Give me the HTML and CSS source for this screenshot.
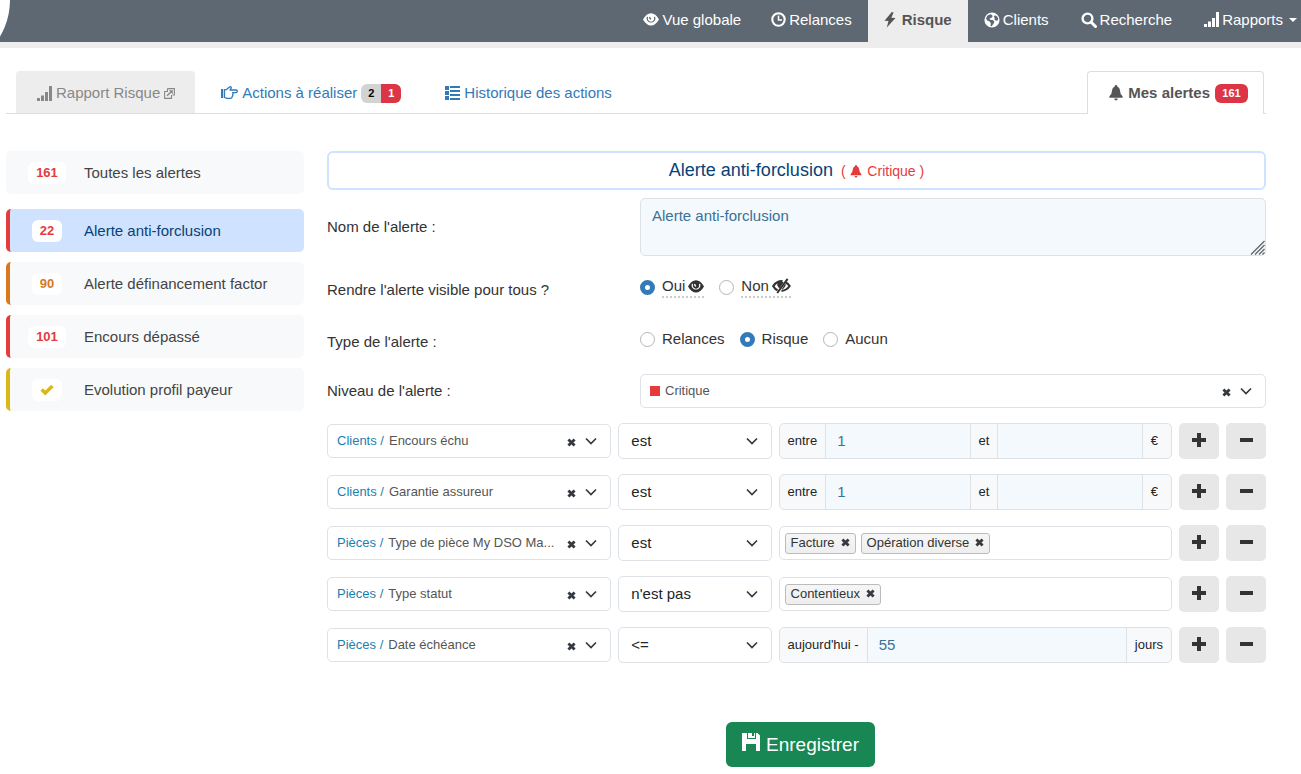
FILE: index.html
```html
<!DOCTYPE html>
<html lang="fr">
<head>
<meta charset="utf-8">
<meta name="viewport" content="width=device-width, initial-scale=1">
<title>Mes alertes</title>
<link rel="stylesheet" href="styles.css">
</head>
<body>
<svg class="sprite" aria-hidden="true">
  <symbol id="eye" viewBox="0 0 16 13"><path fill="currentColor" fill-rule="evenodd" d="M0 6.500Q3.500.3 8 .3T16 6.500Q12.500 12.500 8 12.500T0 6.500ZM3.900 3.600A4.400 4.400 0 1 0 12.100 3.600L10.900 4.200A3.200 3.200 0 1 1 5.100 4.200ZM6.300 3.800a2 2 0 0 0 1.700 2.900l.2-1.100a1.200 1.200 0 0 1-.8-1.500Z"/></symbol>
  <symbol id="eye-off" viewBox="0 0 19 16"><path d="M10.500 3.200Q4.500 3 1.300 8.200 3 11.200 5.600 12.300M13.800 4.600Q16 5.500 17.600 8 14.500 12.600 9.500 12.800" fill="none" stroke="currentColor" stroke-width="2.200"/><path d="M6 4.200Q5 8.500 7.400 9.800L11 4.500ZM13.300 6.500Q13 9.500 10.500 10.800Z" fill="currentColor" stroke="currentColor"/><path d="M15.600.8 5.200 15" stroke="currentColor" stroke-width="2"/></symbol>
  <symbol id="clock" viewBox="0 0 15 15"><circle cx="7.500" cy="7.500" r="6.200" fill="none" stroke="currentColor" stroke-width="2.100"/><path d="M7.500 3.500V8H11" fill="none" stroke="currentColor" stroke-width="1.500"/></symbol>
  <symbol id="bolt" viewBox="0 0 12 16"><path fill="currentColor" d="M7.800 0 .5 8.800 4.500 9 2.800 15.500 11.500 6 7.300 5.800 9.600.6Z"/></symbol>
  <symbol id="globe" viewBox="0 0 16 16"><path fill="currentColor" fill-rule="evenodd" d="M8 .4a7.600 7.600 0 1 1 0 15.200A7.600 7.600 0 0 1 8 .4ZM6.200 2.200 3.600 3.400 2 6.200l1.200 2.300 2.500.9 1.100 1.900-.3 2.700 1.200.2 1.900-2.600.9-2-1.900-1.500-2.500-.4-.7-1.200 1.800-.4 1.400-1.600-.5-1.500ZM11 3.200 9.800 4.600l1 1.300-.5 1.400 1.400 1.300 1.700.1.900-1.600-.9-2.400Z"/></symbol>
  <symbol id="search" viewBox="0 0 16 16"><circle cx="6.500" cy="6.500" r="4.900" fill="none" stroke="currentColor" stroke-width="2.400"/><path d="m10 10 4.500 4.500" stroke="currentColor" stroke-width="3" stroke-linecap="round"/></symbol>
  <symbol id="signal" viewBox="0 0 15 15"><path fill="currentColor" d="M0 12h3v3H0zM4 9.500h3V15H4zM8 6h3v9H8zM12 0h3v15h-3z"/></symbol>
  <symbol id="external" viewBox="0 0 11 11"><path d="M4 3.500H.6v6.900h6.900V7M3.500.6h6.900v6.400H8.500M3.500.6V3" fill="none" stroke="currentColor" stroke-width="1.100"/><path d="m3 7.800 4.500-4.400" stroke="currentColor" stroke-width="1.400"/><path fill="currentColor" d="M4.800 2.300h4v4Z"/></symbol>
  <symbol id="hand" viewBox="0 0 17 14"><path fill="currentColor" d="M0 3h2.200v9H0z"/><path d="M3.500 3.600H5.500L8.800.8q1.600-.3 1.500 1.100L9 4h6q1.400.2 1.300 1.400-.1 1.100-1.300 1.200h-3.400q.9 1 0 2.100.6 1.200-.4 1.900 0 1.600-1.600 1.700H6L3.500 11.500Z" fill="none" stroke="currentColor" stroke-width="1.300" stroke-linejoin="round"/></symbol>
  <symbol id="list" viewBox="0 0 15 14"><path fill="currentColor" d="M0 0h4v4H0zM0 5h4v4H0zM0 10h4v4H0zM5 0h10v2H5zM5 4h10v2H5zM5 8h10v2H5zM5 12h10v2H5z"/></symbol>
  <symbol id="bell" viewBox="0 0 14 16"><path fill="currentColor" d="M7 0q1.200 0 1.300 1.400Q10.800 2.300 11 5.500q.1 4 2.600 5.700v1.500H.4v-1.500Q2.900 9.500 3 5.500q.2-3.200 2.700-4.100Q5.800 0 7 0ZM5.200 13.500h3.600Q8.600 15.500 7 15.500t-1.800-2Z"/></symbol>
  <symbol id="check" viewBox="0 0 14 12"><path fill="currentColor" d="M.4 6.700 2.900 4.200 5.300 6.600 11.200.7 13.600 3.200 5.300 11.500Z"/></symbol>
  <symbol id="cross" viewBox="0 0 9 9"><path d="M1.400 1.400 7.600 7.600M7.600 1.400 1.400 7.600" stroke="currentColor" stroke-width="2.800"/></symbol>
  <symbol id="chevron" viewBox="0 0 12 8"><path d="m1 1.500 5 5 5-5" fill="none" stroke="currentColor" stroke-width="1.700"/></symbol>
  <symbol id="plus" viewBox="0 0 14 14"><path fill="currentColor" d="M5 0h4v5h5v4H9v5H5V9H0V5h5z"/></symbol>
  <symbol id="minus" viewBox="0 0 14 14"><path fill="currentColor" d="M1 5h13v4H1z"/></symbol>
  <symbol id="save" viewBox="0 0 18 18"><path fill="currentColor" fill-rule="evenodd" d="M0 0h5v6h9V0h1.500L18 2.500V18h-4v-7H4v7H0ZM6 0h4v3h2V0h1v5H6Z"/></symbol>
  <symbol id="grip" viewBox="0 0 15 15"><path d="M1 14.500 14.500 1M5 14.500 14.500 5M9 14.500 14.500 9M12.500 14.500l2-2" stroke="currentColor" stroke-width="1.300"/></symbol>
</svg>

<header class="topbar">
  <nav class="topnav">
    <a href="#"><svg class="i-eye"><use href="#eye"/></svg>Vue globale</a>
    <a href="#"><svg class="i-15"><use href="#clock"/></svg>Relances</a>
    <a href="#" class="current" aria-current="page"><svg class="i-bolt"><use href="#bolt"/></svg>Risque</a>
    <a href="#"><svg class="i-16"><use href="#globe"/></svg>Clients</a>
    <a href="#"><svg class="i-16"><use href="#search"/></svg>Recherche</a>
    <a href="#"><svg class="i-15"><use href="#signal"/></svg>Rapports<span class="caret"></span></a>
  </nav>
</header>

<div class="page">
  <nav class="tabs">
    <a href="#" class="tab tab-report"><svg class="i-15"><use href="#signal"/></svg>Rapport Risque<svg class="i-11"><use href="#external"/></svg></a>
    <a href="#" class="tab"><svg class="i-hand"><use href="#hand"/></svg>Actions à réaliser<span class="counts"><b class="todo">2</b><b class="late">1</b></span></a>
    <a href="#" class="tab"><svg class="i-list"><use href="#list"/></svg>Historique des actions</a>
    <a href="#" class="tab tab-active"><svg class="i-bell"><use href="#bell"/></svg>Mes alertes<span class="counts"><b class="late wide">161</b></span></a>
  </nav>

  <main class="columns">
    <nav class="alerts">
      <a href="#" class="alert all"><span class="num-col"><b class="num">161</b></span>Toutes les alertes</a>
      <a href="#" class="alert red selected"><span class="num-col"><b class="num">22</b></span>Alerte anti-forclusion</a>
      <a href="#" class="alert orange"><span class="num-col"><b class="num">90</b></span>Alerte définancement factor</a>
      <a href="#" class="alert red"><span class="num-col"><b class="num">101</b></span>Encours dépassé</a>
      <a href="#" class="alert yellow"><span class="num-col"><b class="num"><svg class="i-check"><use href="#check"/></svg></b></span>Evolution profil payeur</a>
    </nav>

    <form class="editor">
      <h1 class="title">Alerte anti-forclusion <small>( <svg class="i-bell-sm"><use href="#bell"/></svg> Critique )</small></h1>

      <div class="field field-name">
        <label for="name">Nom de l'alerte :</label>
        <div class="area"><textarea id="name">Alerte anti-forclusion</textarea><svg class="grip"><use href="#grip"/></svg></div>
      </div>

      <div class="field field-visible" role="radiogroup" aria-labelledby="visible-label">
        <span class="label" id="visible-label">Rendre l'alerte visible pour tous ?</span>
        <div class="radios">
          <label><input type="radio" name="visible" checked><span class="hint">Oui <svg class="i-eye"><use href="#eye"/></svg></span></label>
          <label><input type="radio" name="visible"><span class="hint">Non<svg class="i-eye-off"><use href="#eye-off"/></svg></span></label>
        </div>
      </div>

      <div class="field field-type" role="radiogroup" aria-labelledby="type-label">
        <span class="label" id="type-label">Type de l'alerte :</span>
        <div class="radios">
          <label><input type="radio" name="type">Relances</label>
          <label><input type="radio" name="type" checked>Risque</label>
          <label><input type="radio" name="type">Aucun</label>
        </div>
      </div>

      <div class="field field-level">
        <label for="level">Niveau de l'alerte :</label>
        <div class="combo"><span class="swatch"></span><select id="level"><option>Critique</option></select><button type="button" class="clear" aria-label="Effacer"><svg><use href="#cross"/></svg></button><svg class="chev"><use href="#chevron"/></svg></div>
      </div>

      <div class="rules">
        <div class="rule">
          <div class="combo"><label for="f1">Clients /</label><select id="f1"><option>Encours échu</option></select><button type="button" class="clear" aria-label="Effacer"><svg><use href="#cross"/></svg></button><svg class="chev"><use href="#chevron"/></svg></div>
          <div class="operator"><select aria-label="Opérateur"><option>est</option></select><svg class="chev"><use href="#chevron"/></svg></div>
          <div class="group"><label for="a1">entre</label><input id="a1" type="text" value="1"><label for="b1">et</label><input id="b1" type="text"><span class="unit">€</span></div>
          <button type="button" class="btn" aria-label="Ajouter"><svg><use href="#plus"/></svg></button>
          <button type="button" class="btn" aria-label="Supprimer"><svg><use href="#minus"/></svg></button>
        </div>
        <div class="rule">
          <div class="combo"><label for="f2">Clients /</label><select id="f2"><option>Garantie assureur</option></select><button type="button" class="clear" aria-label="Effacer"><svg><use href="#cross"/></svg></button><svg class="chev"><use href="#chevron"/></svg></div>
          <div class="operator"><select aria-label="Opérateur"><option>est</option></select><svg class="chev"><use href="#chevron"/></svg></div>
          <div class="group"><label for="a2">entre</label><input id="a2" type="text" value="1"><label for="b2">et</label><input id="b2" type="text"><span class="unit">€</span></div>
          <button type="button" class="btn" aria-label="Ajouter"><svg><use href="#plus"/></svg></button>
          <button type="button" class="btn" aria-label="Supprimer"><svg><use href="#minus"/></svg></button>
        </div>
        <div class="rule">
          <div class="combo"><label for="f3">Pièces /</label><select id="f3"><option>Type de pièce My DSO Ma...</option></select><button type="button" class="clear" aria-label="Effacer"><svg><use href="#cross"/></svg></button><svg class="chev"><use href="#chevron"/></svg></div>
          <div class="operator"><select aria-label="Opérateur"><option>est</option></select><svg class="chev"><use href="#chevron"/></svg></div>
          <div class="chips">
            <span class="chip">Facture<button type="button" aria-label="Retirer Facture"><svg><use href="#cross"/></svg></button></span>
            <span class="chip">Opération diverse<button type="button" aria-label="Retirer Opération diverse"><svg><use href="#cross"/></svg></button></span>
          </div>
          <button type="button" class="btn" aria-label="Ajouter"><svg><use href="#plus"/></svg></button>
          <button type="button" class="btn" aria-label="Supprimer"><svg><use href="#minus"/></svg></button>
        </div>
        <div class="rule">
          <div class="combo"><label for="f4">Pièces /</label><select id="f4"><option>Type statut</option></select><button type="button" class="clear" aria-label="Effacer"><svg><use href="#cross"/></svg></button><svg class="chev"><use href="#chevron"/></svg></div>
          <div class="operator"><select aria-label="Opérateur"><option>n'est pas</option></select><svg class="chev"><use href="#chevron"/></svg></div>
          <div class="chips">
            <span class="chip">Contentieux<button type="button" aria-label="Retirer Contentieux"><svg><use href="#cross"/></svg></button></span>
          </div>
          <button type="button" class="btn" aria-label="Ajouter"><svg><use href="#plus"/></svg></button>
          <button type="button" class="btn" aria-label="Supprimer"><svg><use href="#minus"/></svg></button>
        </div>
        <div class="rule">
          <div class="combo"><label for="f5">Pièces /</label><select id="f5"><option>Date échéance</option></select><button type="button" class="clear" aria-label="Effacer"><svg><use href="#cross"/></svg></button><svg class="chev"><use href="#chevron"/></svg></div>
          <div class="operator"><select aria-label="Opérateur"><option>&lt;=</option></select><svg class="chev"><use href="#chevron"/></svg></div>
          <div class="group"><label for="a5">aujourd'hui -</label><input id="a5" type="text" value="55"><span>jours</span></div>
          <button type="button" class="btn" aria-label="Ajouter"><svg><use href="#plus"/></svg></button>
          <button type="button" class="btn" aria-label="Supprimer"><svg><use href="#minus"/></svg></button>
        </div>
      </div>

      <div class="actions"><button type="submit" class="save"><svg><use href="#save"/></svg>Enregistrer</button></div>
    </form>
  </main>
</div>
</body>
</html>
```
FILE: styles.css
```css
* { box-sizing: border-box; }

body {
  margin: 0;
  background: #fff;
  color: #333;
  font: 15px/20px "Liberation Sans", Arial, sans-serif;
}

a { color: #337ab7; text-decoration: none; }
svg { flex: none; }
.sprite { display: none; }
button, input, select, textarea { font: inherit; color: inherit; margin: 0; }
button { cursor: pointer; }

.i-eye { width: 16px; height: 13px; }
.i-eye-off { width: 19px; height: 16px; }
.i-11 { width: 11px; height: 11px; }
.i-15 { width: 15px; height: 15px; }
.i-16 { width: 16px; height: 16px; }
.i-bolt { width: 12px; height: 16px; }
.i-hand { width: 17px; height: 14px; }
.i-list { width: 15px; height: 14px; }
.i-bell { width: 14px; height: 16px; }
.i-bell-sm { width: 12px; height: 13px; margin: 0 1px; vertical-align: -2px; }
.i-check { width: 14px; height: 12px; }

/* Top bar */
.topbar {
  position: relative;
  overflow: hidden;
  background: #5e6872;
  border-bottom: 6px solid #ededed;
}
.topbar::before {
  content: "";
  position: absolute;
  left: -134px;
  top: -72px;
  width: 144px;
  height: 144px;
  border-radius: 50%;
  background: #fff;
}
.topnav { display: flex; justify-content: flex-end; }
.topnav a {
  display: flex;
  align-items: center;
  gap: 3px;
  height: 42px;
  padding: 0 16px 3px;
  color: #fff;
}
.topnav a:first-child { padding-right: 14px; }
.topnav a:last-child { padding-right: 4px; }
.topnav .current {
  gap: 6px;
  background: #ededed;
  color: #555;
  font-weight: bold;
}
.caret {
  margin-left: 3px;
  border: 4px solid transparent;
  border-top-color: #fff;
  border-bottom: 0;
}

/* Tabs */
.page { padding: 23px 35px 7px 6px; }
.tabs {
  display: flex;
  padding: 0 2px 0 10px;
  border-bottom: 1px solid #ddd;
}
.tab {
  display: flex;
  align-items: center;
  gap: 4px;
  height: 42px;
  padding: 2px 22px 0;
  border-radius: 4px 4px 0 0;
}
.tab-report { margin-right: 4px; padding: 2px 20px 0 21px; background: #ededed; color: #888; }
.tab-active {
  gap: 5px;
  height: 43px;
  margin: 0 0 -1px auto;
  padding: 0 15px 0 21px;
  border: 1px solid #ddd;
  border-bottom: 0;
  background: #fff;
  color: #555;
  font-weight: bold;
}
.counts {
  display: flex;
  overflow: hidden;
  border-radius: 6px;
  font-size: 11px;
  line-height: 19px;
  text-align: center;
}
.counts b { width: 20px; }
.counts .wide { width: 33px; }
.todo { background: #d3d3d3; color: #000; }
.late { background: #dc3545; color: #fff; }

/* Layout */
.columns {
  display: grid;
  grid-template-columns: 298px minmax(0, 1fr);
  gap: 23px;
  margin-top: 37px;
}

/* Alert list */
.alerts { display: flex; flex-direction: column; gap: 10px; }
.alert {
  display: flex;
  align-items: center;
  height: 43px;
  border-left: 4px solid #f8f9fb;
  border-radius: 5px;
  background: #f8f9fb;
  color: #444;
}
.alert.all { margin-bottom: 5px; }
.red { border-left-color: #e53b3b; }
.orange { border-left-color: #d9791e; }
.yellow { border-left-color: #d9b916; }
.selected { background: #cfe2ff; color: #084276; }
.num-col { display: flex; justify-content: center; width: 74px; }
.num {
  display: flex;
  align-items: center;
  height: 22px;
  padding: 0 8px;
  border-radius: 6px;
  background: #fff;
  color: #e53b3b;
  font-size: 13px;
}
.orange .num { color: #d9791e; }
.yellow .num { color: #d9b916; }

/* Editor */
.title {
  height: 39px;
  margin: 0 0 8px;
  border: 2px solid #cfe2ff;
  border-radius: 6px;
  color: #084276;
  font-size: 18px;
  font-weight: normal;
  line-height: 35px;
  text-align: center;
}
.title small { margin-left: 3px; color: #e53b3b; font-size: 14px; }

.field {
  display: grid;
  grid-template-columns: 1fr 2fr;
  align-items: center;
}
.area { position: relative; height: 58px; }
textarea {
  display: block;
  width: 100%;
  height: 58px;
  padding: 7px 11px;
  border: 1px solid #dee2e6;
  border-radius: 5px;
  background: #f4f9fd;
  color: #3a7196;
  resize: none;
}
.grip {
  position: absolute;
  right: 1px;
  bottom: 1px;
  width: 15px;
  height: 15px;
  color: #666;
}
.field-visible { padding-top: 18px; }
.field-type { padding-top: 26px; }
.field-visible .label, .field-type .label { padding-top: 6px; }
.field-level { padding-top: 22px; }

.radios { display: flex; gap: 15px; }
.radios label { display: flex; align-items: center; gap: 7px; }
.radios input {
  appearance: none;
  width: 15px;
  height: 15px;
  border: 1px solid #b5b5b5;
  border-radius: 50%;
  background: #fff;
}
.radios input:checked { border: 5px solid #337ab7; }
.hint {
  display: flex;
  align-items: center;
  gap: 3px;
  border-bottom: 2px dotted #ccc;
}

.combo, .operator, .group, .chips {
  display: flex;
  min-width: 0;
  border: 1px solid #dee2e6;
  border-radius: 5px;
  background: #fff;
}
.combo {
  align-items: center;
  height: 34px;
  padding: 0 13px 0 9px;
  color: #555;
  font-size: 13px;
}
.combo label { margin-right: 5px; color: #1b7fb0; }
select {
  flex: 1;
  appearance: none;
  min-width: 0;
  height: 32px;
  padding: 0;
  border: 0;
  background: transparent;
  outline-offset: -2px;
}
.chev { width: 12px; height: 8px; color: #343a40; pointer-events: none; }
.swatch { width: 10px; height: 10px; margin-right: 5px; background: #e53b3b; }
.clear, .chip button {
  display: flex;
  padding: 0;
  border: 0;
  background: none;
  color: #343a40;
}
.clear { padding-top: 2px; margin: 0 9px 0 6px; }
.chip button { padding-bottom: 2px; }
.clear svg, .chip svg { width: 9px; height: 9px; }

.rules { display: grid; gap: 15px; margin-top: 15px; }
.rule {
  display: grid;
  grid-template-columns: minmax(0, 284fr) minmax(0, 153fr) minmax(0, 393fr) 40px 40px;
  gap: 7px;
  align-items: center;
}
.operator {
  align-items: center;
  height: 36px;
  padding: 0 13px 0 12px;
  color: #212529;
}
.group { height: 36px; overflow: hidden; background: #f8f9fb; color: #212529; font-size: 13px; }
.group label, .group span { padding: 0 8px; line-height: 34px; }
.group .unit { padding-right: 13px; }
.group input {
  flex: 1;
  min-width: 0;
  padding: 0 11px;
  border: solid #dee2e6;
  border-width: 0 1px;
  background: #f4f9fd;
  color: #3a7196;
  font-size: 15px;
}
.chips { align-items: center; gap: 5px; height: 34px; padding: 0 5px; }
.chip {
  display: flex;
  align-items: center;
  gap: 6px;
  height: 21px;
  padding: 0 5px;
  border: 1px solid #bbb;
  border-radius: 3px;
  background: linear-gradient(#f6f6f6, #eee);
  color: #333;
  font-size: 13px;
}
.btn {
  display: flex;
  align-items: center;
  justify-content: center;
  height: 36px;
  padding: 0 0 2px;
  border: 0;
  border-radius: 5px;
  background: #e7e7e7;
  color: #333;
}
.btn svg { width: 14px; height: 14px; }

.actions { display: flex; justify-content: center; margin-top: 59px; padding-left: 8px; }
.save {
  display: flex;
  align-items: center;
  gap: 6px;
  height: 45px;
  padding: 0 16px;
  border: 0;
  border-radius: 6px;
  background: #198754;
  color: #fff;
  font-size: 19px;
}
.save svg { width: 18px; height: 18px; margin-bottom: 5px; }
```
